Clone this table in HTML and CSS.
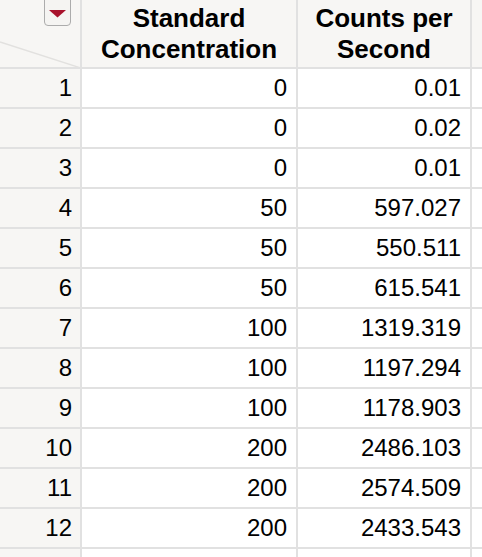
FILE: index.html
```html
<!DOCTYPE html>
<html>
<head>
<meta charset="utf-8">
<link rel="stylesheet" href="styles.css">
</head>
<body>
<div class="grid">
  <div class="corner">
    <svg class="diag" width="80" height="67" viewBox="0 0 80 67"><line x1="0" y1="42" x2="81" y2="68" stroke="#e2e1df" stroke-width="1.5"/></svg>
    <div class="menu">
      <svg width="19" height="9" viewBox="0 0 19 9"><polygon points="1,1 18,1 9.5,8.5" fill="#a8122c"/></svg>
    </div>
  </div>
  <div class="head">Standard<br>Concentration</div>
  <div class="head">Counts per<br>Second</div>
  <div class="head"></div>

  <div class="rn">1</div><div class="cell">0</div><div class="cell">0.01</div><div class="cell"></div>
  <div class="rn">2</div><div class="cell">0</div><div class="cell">0.02</div><div class="cell"></div>
  <div class="rn">3</div><div class="cell">0</div><div class="cell">0.01</div><div class="cell"></div>
  <div class="rn">4</div><div class="cell">50</div><div class="cell">597.027</div><div class="cell"></div>
  <div class="rn">5</div><div class="cell">50</div><div class="cell">550.511</div><div class="cell"></div>
  <div class="rn">6</div><div class="cell">50</div><div class="cell">615.541</div><div class="cell"></div>
  <div class="rn">7</div><div class="cell">100</div><div class="cell">1319.319</div><div class="cell"></div>
  <div class="rn">8</div><div class="cell">100</div><div class="cell">1197.294</div><div class="cell"></div>
  <div class="rn">9</div><div class="cell">100</div><div class="cell">1178.903</div><div class="cell"></div>
  <div class="rn">10</div><div class="cell">200</div><div class="cell">2486.103</div><div class="cell"></div>
  <div class="rn">11</div><div class="cell">200</div><div class="cell">2574.509</div><div class="cell"></div>
  <div class="rn">12</div><div class="cell">200</div><div class="cell">2433.543</div><div class="cell"></div>
  <div class="rn"></div><div class="cell"></div><div class="cell"></div><div class="cell"></div>
</div>
</body>
</html>
```
FILE: styles.css
```css
html, body {
  margin: 0;
  padding: 0;
  background: #ffffff;
  overflow: hidden;
}
body {
  width: 482px;
  height: 557px;
  font-family: "Liberation Sans", Arial, Helvetica, sans-serif;
  color: #000;
}
.grid {
  display: grid;
  grid-template-columns: 80px 214px 172px 1fr;
  grid-template-rows: 67px repeat(12, 38px) 8px;
  gap: 2px;
  background: #e1e1e1;
  width: 482px;
  height: 557px;
  overflow: hidden;
}
.corner {
  position: relative;
  background: #f7f6f4;
  overflow: hidden;
}
.diag {
  position: absolute;
  left: 0;
  top: 0;
}
.menu {
  position: absolute;
  left: 44px;
  top: -5px;
  width: 25px;
  height: 26px;
  border: 1.5px solid #acacac;
  border-radius: 4px;
  background: #f5f4f2;
  display: flex;
  align-items: center;
  justify-content: center;
  padding-top: 3px;
  box-sizing: content-box;
}
.menu svg {
  display: block;
  margin-top: 2px;
}
.head {
  background: #f7f6f4;
  font-weight: bold;
  font-size: 26px;
  line-height: 31px;
  text-align: center;
  display: flex;
  align-items: center;
  justify-content: center;
  padding-top: 1px;
}
.rn {
  background: #f7f6f4;
  font-size: 24px;
  text-align: right;
  padding-right: 8px;
  line-height: 38px;
}
.cell {
  background: #ffffff;
  font-size: 24px;
  text-align: right;
  padding-right: 9px;
  line-height: 38px;
}
```
